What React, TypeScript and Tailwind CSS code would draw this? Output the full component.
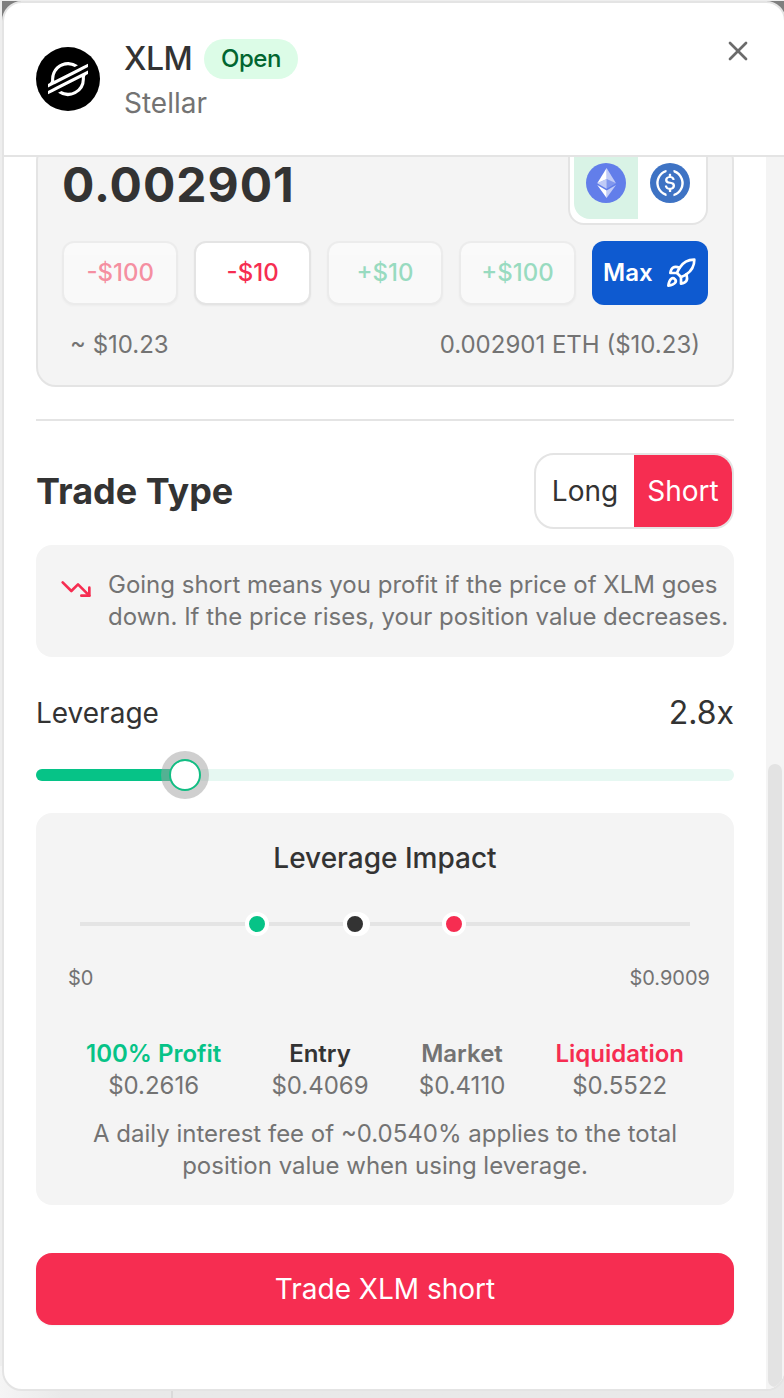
import type { ReactNode } from "react";
import { Rocket, TrendingDown, X } from "lucide-react";
import { SiStellar } from "react-icons/si";

function EthIcon() {
  return (
    <svg viewBox="0 0 32 32" className="size-10">
      <circle cx="16" cy="16" r="16" fill="#627EEA" />
      <g fill="#fff">
        <path fillOpacity=".6" d="M16.498 4v8.87l7.497 3.35z" />
        <path d="M16.498 4L9 16.22l7.498-3.35z" />
        <path fillOpacity=".6" d="M16.498 21.968v6.027L24 17.616z" />
        <path d="M16.498 27.995v-6.028L9 17.616z" />
        <path fillOpacity=".2" d="M16.498 20.573l7.497-4.353-7.497-3.348z" />
        <path fillOpacity=".6" d="M9 16.22l7.498 4.353v-7.701z" />
      </g>
    </svg>
  );
}

function UsdcIcon() {
  return (
    <svg viewBox="0 0 32 32" className="size-10">
      <circle cx="16" cy="16" r="16" fill="#3E73C4" />
      <g fill="#fff">
        <path d="M20.022 18.124c0-2.124-1.28-2.852-3.84-3.156-1.828-.243-2.193-.728-2.193-1.578 0-.85.61-1.396 1.828-1.396 1.097 0 1.707.364 2.011 1.275a.458.458 0 00.427.303h.975a.416.416 0 00.427-.425v-.06a3.04 3.04 0 00-2.743-2.489V9.142c0-.243-.183-.425-.487-.486h-.915c-.243 0-.426.182-.487.486v1.396c-1.829.242-2.986 1.456-2.986 2.974 0 2.002 1.218 2.791 3.778 3.095 1.707.303 2.255.668 2.255 1.639 0 .97-.853 1.638-2.011 1.638-1.585 0-2.133-.667-2.316-1.578-.06-.242-.244-.364-.427-.364h-1.036a.416.416 0 00-.426.425v.06c.243 1.518 1.219 2.61 3.23 2.914v1.457c0 .242.183.425.487.485h.915c.243 0 .426-.182.487-.485V21.34c1.829-.303 3.047-1.578 3.047-3.217z" />
        <path d="M12.892 24.497c-4.754-1.7-7.192-6.98-5.424-11.653.914-2.55 2.925-4.491 5.424-5.402.244-.121.365-.303.365-.607v-.85c0-.242-.121-.424-.365-.485-.061 0-.183 0-.244.06a10.895 10.895 0 00-7.13 13.717c1.096 3.4 3.717 6.01 7.13 7.102.244.121.488 0 .548-.243.061-.06.061-.122.061-.243v-.85c0-.182-.182-.424-.365-.546zm6.46-18.936c-.244-.122-.488 0-.548.242-.061.061-.061.122-.061.243v.85c0 .243.182.485.365.607 4.754 1.7 7.192 6.98 5.424 11.653-.914 2.55-2.925 4.491-5.424 5.402-.244.121-.365.303-.365.607v.85c0 .242.121.424.365.485.061 0 .183 0 .244-.06a10.895 10.895 0 007.13-13.717c-1.096-3.46-3.778-6.07-7.13-7.162z" />
      </g>
    </svg>
  );
}

function StepButton({ children, tone, disabled }: { children: ReactNode; tone: "up" | "down"; disabled?: boolean }) {
  return (
    <button
      disabled={disabled}
      className={`flex h-16 items-center justify-center rounded-xl border-2 border-[#e4e4e4] bg-white text-[24px] font-medium shadow-xs ${
        tone === "up" ? "text-[#3fc48e]" : "text-[#f62d51]"
      } ${disabled ? "opacity-50" : ""}`}
    >
      {children}
    </button>
  );
}

function Stat({ label, value, color }: { label: ReactNode; value: ReactNode; color: string }) {
  return (
    <div className="flex flex-col items-center">
      <span className={`font-semibold ${color}`}>{label}</span>
      <span>{value}</span>
    </div>
  );
}

export default function App() {
  return (
    <div className="relative h-[1398px] w-[784px] overflow-hidden bg-[#eeeeee] pt-px pl-0.5 font-['Inter',sans-serif] text-[#333333]">
      <div className="absolute top-px left-0.5 h-8 w-[782px] bg-[#7f7f7f]" />
      <div className="absolute bottom-0 left-0 h-8 w-full bg-linear-to-r from-[#f5f5f5] to-[#e9e9e9] to-8%" />
      <div className="absolute bottom-0 left-[171px] h-2 w-0.5 bg-[#dadada]" />

      <div className="relative flex h-[1390px] w-[784px] flex-col overflow-hidden rounded-[20px] border-2 border-[#e4e4e4] bg-white">
        <header className="flex h-[154px] shrink-0 items-start border-b-2 border-[#e4e4e4] pl-8">
          <div className="mt-11 flex size-16 items-center justify-center rounded-full bg-black">
            <SiStellar className="size-10 text-white" />
          </div>
          <div className="mt-9 ml-6 flex flex-col">
            <div className="flex h-10 items-center gap-4">
              <span className="w-16 text-[32px] font-medium tracking-[-0.5px] whitespace-nowrap">XLM</span>
              <span className="flex h-10 w-[94px] items-center justify-center rounded-full bg-[#dcfce7] text-[24px] font-medium tracking-[-0.5px] text-[#016630]">
                Open
              </span>
            </div>
            <span className="mt-1 text-[28px] leading-10 text-[#737373]">Stellar</span>
          </div>
          <button className="mt-8 mr-[30px] ml-auto text-[#6b6b6b]">
            <X size={32} />
          </button>
        </header>

        <div className="flex min-h-0 grow">
          <main className="flex w-[762px] shrink-0 flex-col overflow-hidden pr-8 pl-8">
            <section className="-mt-4 flex h-[246px] shrink-0 flex-col rounded-[20px] border-2 border-[#e4e4e4] bg-[#f4f4f4] px-6">
              <div className="flex h-[82px] shrink-0 items-end justify-between">
                <span className="mb-[11px] text-[48px] leading-[58px] font-bold tracking-[1px]">0.002901</span>
                <div className="flex h-[100px] w-[140px] shrink-0 rounded-2xl border-2 border-[#e4e4e4] bg-white p-1">
                  <div className="flex w-16 items-end justify-center rounded-l-2xl bg-[#d9f3e6] pb-4">
                    <EthIcon />
                  </div>
                  <div className="flex w-16 items-end justify-center pb-4">
                    <UsdcIcon />
                  </div>
                </div>
              </div>
              <div className="mt-4 grid shrink-0 grid-cols-5 gap-4">
                <StepButton tone="down" disabled>-$100</StepButton>
                <StepButton tone="down">-$10</StepButton>
                <StepButton tone="up" disabled>+$10</StepButton>
                <StepButton tone="up" disabled>+$100</StepButton>
                <button className="flex h-16 items-center justify-center gap-3 rounded-xl bg-[#0e5ad0] text-[24px] font-semibold text-white">
                  Max
                  <Rocket size={32} />
                </button>
              </div>
              <div className="mt-6 flex h-8 items-center justify-between px-2 text-[24px] text-[#737373]">
                <span>~ $10.23</span>
                <span>0.002901 ETH ($10.23)</span>
              </div>
            </section>

            <div className="mt-8 h-0.5 shrink-0 bg-[#e4e4e4]" />

            <div className="mt-8 flex h-[76px] shrink-0 items-center justify-between">
              <h2 className="text-[36px] font-bold">Trade Type</h2>
              <div className="flex h-[76px] w-[200px] overflow-hidden rounded-[20px] border-2 border-[#e4e4e4] text-[28px]">
                <button className="w-[98px]">Long</button>
                <button className="w-[98px] bg-[#f62d51] text-white">Short</button>
              </div>
            </div>

            <div className="mt-4 flex h-28 shrink-0 gap-4 rounded-2xl bg-[#f4f4f4] p-6 text-[24px] leading-8 text-[#737373]">
              <TrendingDown size={32} className="mt-1 shrink-0 text-[#f62d51]" />
              <p className="whitespace-nowrap">
                <span>Going short means you profit if the price of XLM goes</span>
                <br />
                <span>down. If the price rises, your position value decreases.</span>
              </p>
            </div>

            <div className="mt-8 flex h-12 shrink-0 items-center justify-between">
              <span className="text-[28px]">Leverage</span>
              <span className="text-[32px]">2.8x</span>
            </div>

            <div className="relative mt-8 h-3 shrink-0 rounded-full bg-[#e6f8f2]">
              <div className="h-3 w-[149px] rounded-l-full bg-[#06c387]" />
              <div className="absolute top-[-18px] left-[125px] flex size-12 items-center justify-center rounded-full bg-[#a0a0a0]/50">
                <div className="size-8 rounded-full border-2 border-[#12bd83] bg-white" />
              </div>
            </div>

            <section className="mt-8 flex h-[392px] shrink-0 flex-col rounded-2xl bg-[#f4f4f4] text-[24px] text-[#737373]">
              <h3 className="mt-6 text-center text-[28px] leading-[42px] font-medium text-[#333333]">Leverage Impact</h3>
              <div className="relative mx-11 mt-[43px] h-1 shrink-0 bg-[#e4e4e4]">
                <div className="absolute top-[-10px] left-[165px] size-6 rounded-full border-4 border-white bg-[#06c387]" />
                <div className="absolute top-[-10px] left-[266px] size-6 rounded-full bg-white" />
                <div className="absolute top-[-10px] left-[263px] size-6 rounded-full border-4 border-white bg-[#333333]" />
                <div className="absolute top-[-10px] left-[362px] size-6 rounded-full border-4 border-white bg-[#f62d51]" />
              </div>
              <div className="mt-[38px] flex justify-between pr-6 pl-8 text-[20px] leading-7">
                <span>$0</span>
                <span>$0.9009</span>
              </div>
              <div className="mt-[46px] flex justify-between pr-[50px] pl-[50px] leading-8 whitespace-nowrap">
                <Stat label="100% Profit" value="$0.2616" color="text-[#06c387]" />
                <Stat label="Entry" value="$0.4069" color="text-[#333333]" />
                <Stat label="Market" value="$0.4110" color="text-[#737373]" />
                <Stat label="Liquidation" value="$0.5522" color="text-[#f62d51]" />
              </div>
              <p className="mt-4 text-center leading-8 whitespace-nowrap">
                <span>A daily interest fee of ~0.0540% applies to the total</span>
                <br />
                <span>position value when using leverage.</span>
              </p>
            </section>

            <button className="mt-12 h-[72px] shrink-0 rounded-2xl bg-[#f62d51] text-[28px] text-white shadow-xs">
              Trade XLM short
            </button>
          </main>
          <div className="w-[18px] shrink-0 bg-[#f4f4f4] px-0.5 pt-[607px]">
            <div className="h-[623px] w-3.5 rounded-full bg-[#e3e3e3]" />
          </div>
        </div>
      </div>
    </div>
  );
}
